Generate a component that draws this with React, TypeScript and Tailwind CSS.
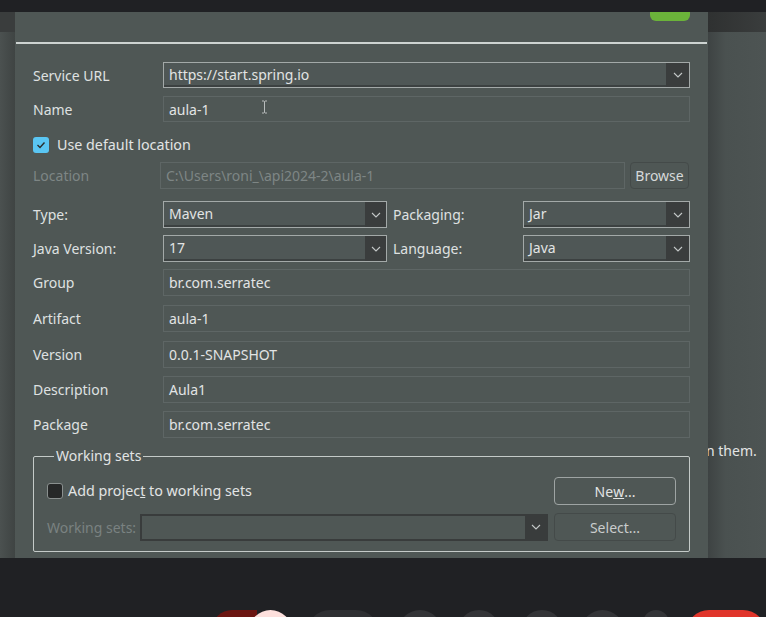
import React from 'react';

const Chevron = () => (
  <svg width="10" height="6" viewBox="0 0 10 6" fill="none">
    <polyline points="1,1 5,5 9,1" stroke="#c4c8c8" strokeWidth="1.1" />
  </svg>
);

function Combo({ value, width, button = 23, h = 'h-[27px]' }: { value: string; width: string; button?: number; h?: string }) {
  return (
    <div className={`${width} ${h} flex border border-[#a3a9a8] bg-[#4f5756]`}>
      <div className="flex-1 flex items-center pl-[5px] border-b-2 border-[#3c4141] text-[#e2e4e4]">
        {value}
      </div>
      <div
        className="h-full flex items-center justify-center bg-[#3a3d3d]"
        style={{ width: button }}
      >
        <Chevron />
      </div>
    </div>
  );
}

function Field({ value, disabled = false, width = 'flex-1' }: { value: string; disabled?: boolean; width?: string }) {
  return (
    <div
      className={`${width} h-[27px] flex items-center pl-[5px] border border-[#5e6665] ${
        disabled ? 'text-[#7e8685]' : 'text-[#e2e4e4]'
      }`}
    >
      {value}
    </div>
  );
}

function Row({ label, children, mt }: { label: string; children: React.ReactNode; mt: string }) {
  return (
    <div className={`flex items-center ${mt}`}>
      <div className="w-[130px] shrink-0 text-[#dfe1e1]">{label}</div>
      {children}
    </div>
  );
}

export default function App() {
  return (
    <div
      className="w-[766px] h-[617px] overflow-hidden bg-[#202124] flex flex-col text-[14px]"
      style={{ fontFamily: '"Noto Sans", "Open Sans", sans-serif' }}
    >
      <div className="h-[12px] shrink-0" />

      <div className="h-[546px] flex shrink-0">
        {/* left strip */}
        <div className="w-[15px] flex flex-col">
          <div className="h-[20px] bg-[#3a3d3d]" />
          <div className="flex-1 bg-gradient-to-r from-[#4b5150] to-[#3f4443]" />
        </div>

        {/* dialog */}
        <div className="w-[693px] bg-[#4f5755] relative flex flex-col px-[18px]">
          <div className="absolute left-[635px] top-0 w-[40px] h-[9px] bg-[#6bb33a] rounded-b-[6px]" />
          <div className="-mx-[17px] mt-[30px] h-[2px] bg-[#cdd3d1]" />

          <Row label="Service URL" mt="mt-[18px]">
            <Combo value="https://start.spring.io" width="flex-1" h="h-[26px]" />
          </Row>

          <Row label="Name" mt="mt-[8px]">
            <div className="flex-1 h-[26px] flex items-center pl-[5px] border border-[#5e6665] text-[#e2e4e4] relative">
              aula-1
              <svg className="absolute left-[97px] top-[3px]" width="7" height="14" viewBox="0 0 7 14" fill="none">
                <path d="M1 1h2l.5.5L4 1h2M3.5 1.5v11M1 13h2l.5-.5.5.5h2" stroke="#b8bcbc" strokeWidth="1" />
              </svg>
            </div>
          </Row>

          <div className="flex items-center mt-[15px] h-[16px]">
            <div className="w-[16px] h-[16px] rounded-[3px] bg-[#5ac6f3] flex items-center justify-center">
              <svg width="10" height="8" viewBox="0 0 10 8" fill="none">
                <polyline points="1.5,4 4,6.5 8.5,1.5" stroke="#2a2d2d" strokeWidth="1.4" />
              </svg>
            </div>
            <span className="ml-[8px] text-[#e2e4e4] text-[14.3px]">Use default location</span>
          </div>

          <div className="flex items-center mt-[9px]">
            <div className="w-[127px] shrink-0 text-[#7e8685]">Location</div>
            <Field value="C:\Users\roni_\api2024-2\aula-1" disabled width="w-[465px]" />
            <div className="ml-[5px] w-[59px] h-[27px] flex items-center justify-center rounded-[4px] border border-[#444a49] text-[#d6d9d9]">
              Browse
            </div>
          </div>

          <Row label="Type:" mt="mt-[12px]">
            <Combo value="Maven" width="w-[224px]" button={21} />
            <div className="w-[136px] pl-[6px] text-[#dfe1e1]">Packaging:</div>
            <Combo value="Jar" width="flex-1" />
          </Row>

          <Row label="Java Version:" mt="mt-[7px]">
            <Combo value="17" width="w-[224px]" button={21} />
            <div className="w-[136px] pl-[6px] text-[#dfe1e1]">Language:</div>
            <Combo value="Java" width="flex-1" />
          </Row>

          <Row label="Group" mt="mt-[7px]">
            <Field value="br.com.serratec" />
          </Row>
          <Row label="Artifact" mt="mt-[9px]">
            <Field value="aula-1" />
          </Row>
          <Row label="Version" mt="mt-[9px]">
            <Field value="0.0.1-SNAPSHOT" />
          </Row>
          <Row label="Description" mt="mt-[8px]">
            <Field value="Aula1" />
          </Row>
          <Row label="Package" mt="mt-[8px]">
            <Field value="br.com.serratec" />
          </Row>

          <fieldset className="mt-[8px] h-[106px] border border-[#c4cac8] rounded-[2px] px-[13px] flex flex-col">
            <legend className="ml-[7px] px-[2px] text-[#e2e4e4] leading-[20px]">Working sets</legend>
            <div className="flex items-center justify-between mt-[11px]">
              <div className="flex items-center">
                <div className="w-[16px] h-[16px] rounded-[3px] bg-[#262828] border border-[#8a908f]" />
                <span className="ml-[5px] text-[#e2e4e4] text-[14.3px]">
                  Add projec<span className="underline">t</span> to working sets
                </span>
              </div>
              <div className="w-[122px] h-[28px] flex items-center justify-center rounded-[4px] border border-[#9ea4a3] text-[#e2e4e4]">
                Ne<span className="underline">w</span>...
              </div>
            </div>
            <div className="flex items-center mt-[8px]">
              <div className="w-[93px] shrink-0 text-[#7a8281]">Working sets:</div>
              <div className="w-[408px] h-[27px] flex border-2 border-[#393c3c]">
                <div className="flex-1" />
                <div className="w-[21px] h-full flex items-center justify-center bg-[#393c3c]">
                  <Chevron />
                </div>
              </div>
              <div className="ml-[6px] w-[122px] h-[28px] flex items-center justify-center rounded-[4px] border border-[#444a49] text-[#c9cccc]">
                Select...
              </div>
            </div>
          </fieldset>
        </div>

        {/* right strip */}
        <div className="w-[58px] flex flex-col overflow-hidden">
          <div className="h-[20px] bg-gradient-to-r from-[#2f3131] to-[#3a3d3d]" />
          <div className="flex-1 bg-gradient-to-r from-[#3e4343] via-[#4a5150] via-30% to-[#4d5453] text-[#e2e4e4]">
            <div className="mt-[408px] -ml-[2px] whitespace-nowrap">n them.</div>
          </div>
        </div>
      </div>

      {/* taskbar */}
      <div className="flex-1 relative">
        <div className="flex mt-[52px]">
          <div className="ml-[212px] w-[48px] h-[46px] rounded-tl-[20px] bg-[#6b1511]" />
          <div className="-ml-[8px] w-[46px] h-[46px] rounded-full bg-[#fde0dd]" />
          <div className="ml-[15px] w-[76px] h-[46px] rounded-full bg-[#2e2f32]" />
          <div className="ml-[19px] w-[47px] h-[46px] rounded-full bg-[#333437]" />
          <div className="ml-[16px] w-[45px] h-[46px] rounded-full bg-[#333437]" />
          <div className="ml-[21px] w-[45px] h-[46px] rounded-full bg-[#333437]" />
          <div className="ml-[18px] w-[45px] h-[46px] rounded-full bg-[#333437]" />
          <div className="ml-[19px] w-[28px] h-[46px] rounded-full bg-[#333437]" />
          <div className="ml-[17px] w-[80px] h-[46px] rounded-full bg-[#e0352b] shrink-0" />
        </div>
      </div>
    </div>
  );
}
